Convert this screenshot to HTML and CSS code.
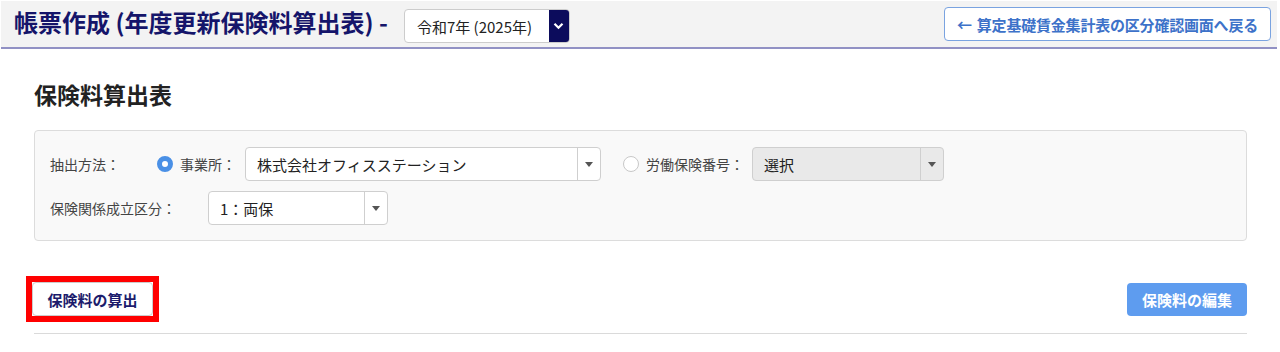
FILE: index.html
```html
<!DOCTYPE html>
<html lang="ja">
<head>
  <meta charset="UTF-8" />
  <meta name="viewport" content="width=device-width, initial-scale=1.0"/>
  <title>帳票作成 (年度更新保険料算出表)</title>
  <link rel="stylesheet" href="styles.css">
</head>
<body>

  <header class="page-header">
    <h1 class="page-title">帳票作成 (年度更新保険料算出表) -</h1>
    <div class="year-select">
      <span class="year-select-text">令和7年 (2025年)</span>
      <span class="year-select-btn">
        <svg width="11" height="8" viewBox="0 0 11 8"><path d="M1.5 1.8 L5.5 5.8 L9.5 1.8" fill="none" stroke="#fff" stroke-width="2.2"/></svg>
      </span>
    </div>
    <button class="back-btn"><span class="back-arrow">←</span>算定基礎賃金集計表の区分確認画面へ戻る</button>
  </header>

  <main class="content">
    <h2 class="section-title">保険料算出表</h2>

    <div class="filter-panel">
      <div class="filter-row">
        <span class="filter-label label-method">抽出方法：</span>
        <label class="radio-item">
          <span class="radio radio-checked"></span>
          <span class="radio-text">事業所：</span>
        </label>
        <div class="select select-office">
          <span class="select-value">株式会社オフィスステーション</span>
          <span class="select-arrow"></span>
        </div>
        <label class="radio-item radio-second">
          <span class="radio"></span>
          <span class="radio-text">労働保険番号：</span>
        </label>
        <div class="select select-number disabled">
          <span class="select-value">選択</span>
          <span class="select-arrow"></span>
        </div>
      </div>
      <div class="filter-row">
        <span class="filter-label label-type">保険関係成立区分：</span>
        <div class="select select-type">
          <span class="select-value">1：両保</span>
          <span class="select-arrow"></span>
        </div>
      </div>
    </div>

    <div class="action-row">
      <div class="highlight">
        <button class="calc-btn">保険料の算出</button>
      </div>
      <button class="edit-btn">保険料の編集</button>
    </div>
    <hr class="divider">
  </main>

</body>
</html>
```

FILE: styles.css
```css
/* Reset */
* {
  margin: 0;
  padding: 0;
  box-sizing: border-box;
  font-family: "Noto Sans CJK JP", "Noto Sans", sans-serif;
}

body {
  background: #fff;
  color: #333;
  width: 1280px;
  height: 352px;
  overflow: hidden;
}

/* Header bar */
.page-header {
  margin: 1px 3px 0 1px;
  height: 48px;
  background: #f3f3f3;
  border-bottom: 2px solid #9191c4;
  display: flex;
  align-items: flex-start;
  padding: 0 6px 0 13px;
}

.page-title {
  font-size: 24px;
  font-weight: 700;
  color: #15156a;
  line-height: 1;
  white-space: nowrap;
  margin-top: 9px;
}

.year-select {
  margin-left: 16px;
  margin-top: 8px;
  display: flex;
  height: 34px;
  width: 166px;
  border: 1px solid #ccc;
  border-radius: 4px;
  background: #fff;
  overflow: hidden;
}
.year-select-text {
  flex: 1;
  font-size: 15px;
  color: #222;
  display: flex;
  align-items: center;
  padding-left: 12px;
}
.year-select-btn {
  width: 20px;
  background: #0c0c5c;
  display: flex;
  align-items: center;
  justify-content: center;
}

.back-btn {
  margin-left: auto;
  margin-top: 6px;
  height: 34px;
  padding: 0 12px 0 12px;
  background: #fff;
  border: 1px solid #7aa3e0;
  border-radius: 4px;
  color: #3d72c9;
  font-size: 15px;
  font-weight: 700;
  letter-spacing: -0.2px;
  white-space: nowrap;
}
.back-arrow {
  margin-right: 5px;
}

/* Content */
.content {
  padding: 0 33px 0 34px;
}

.section-title {
  font-size: 23px;
  font-weight: 700;
  color: #222;
  line-height: 33px;
  margin-top: 29px;
  margin-bottom: 19px;
}

/* Filter panel */
.filter-panel {
  background: #f9f9f9;
  border: 1px solid #dcdcdc;
  border-radius: 4px;
  padding: 16px 15px 15px 15px;
  display: flex;
  flex-direction: column;
  gap: 10px;
}

.filter-row {
  display: flex;
  align-items: center;
}

.filter-label {
  font-size: 14px;
  color: #444;
}
.label-method {
  width: 107px;
}
.label-type {
  width: 158px;
}

.radio-item {
  display: flex;
  align-items: center;
  gap: 7px;
  margin-right: 9px;
}
.radio-second {
  margin-left: 22px;
  margin-right: 8px;
}
.radio {
  width: 16px;
  height: 16px;
  border-radius: 50%;
  border: 1px solid #c8c8c8;
  background: #fff;
}
.radio-checked {
  border: 5px solid #4a90e6;
  background: #fff;
}
.radio-text {
  font-size: 14px;
  color: #444;
}

/* Select boxes */
.select {
  height: 34px;
  display: flex;
  border: 1px solid #cfcfcf;
  border-radius: 4px;
  background: #fff;
}
.select-value {
  flex: 1;
  display: flex;
  align-items: center;
  padding-left: 11px;
  font-size: 15px;
  color: #222;
}
.select-arrow {
  width: 23px;
  border-left: 1px solid #cfcfcf;
  position: relative;
}
.select-arrow::after {
  content: "";
  position: absolute;
  left: 7px;
  top: 14px;
  border-left: 4.5px solid transparent;
  border-right: 4.5px solid transparent;
  border-top: 5px solid #555;
}
.select.disabled {
  background: #e9e9e9;
}
.select-office {
  width: 356px;
}
.select-number {
  width: 192px;
}
.select-type {
  width: 180px;
}

/* Actions */
.action-row {
  display: flex;
  justify-content: space-between;
  align-items: center;
  margin-top: 41px;
}

/* red annotation frame around the calc button */
.highlight {
  border: 6px solid #ff0000;
  margin: -6px 0 -6px -8px;
  display: flex;
}

.calc-btn {
  width: 121px;
  height: 34px;
  background: #fff;
  border: 1px solid #ccc;
  border-radius: 4px;
  color: #1c1c6c;
  font-size: 15px;
  font-weight: 700;
}

.edit-btn {
  width: 120px;
  height: 33px;
  background: #5e9cef;
  border: none;
  border-radius: 4px;
  color: #fff;
  font-size: 15px;
  font-weight: 700;
}

.divider {
  border: none;
  border-top: 1px solid #dadada;
  margin-top: 17px;
}
```
